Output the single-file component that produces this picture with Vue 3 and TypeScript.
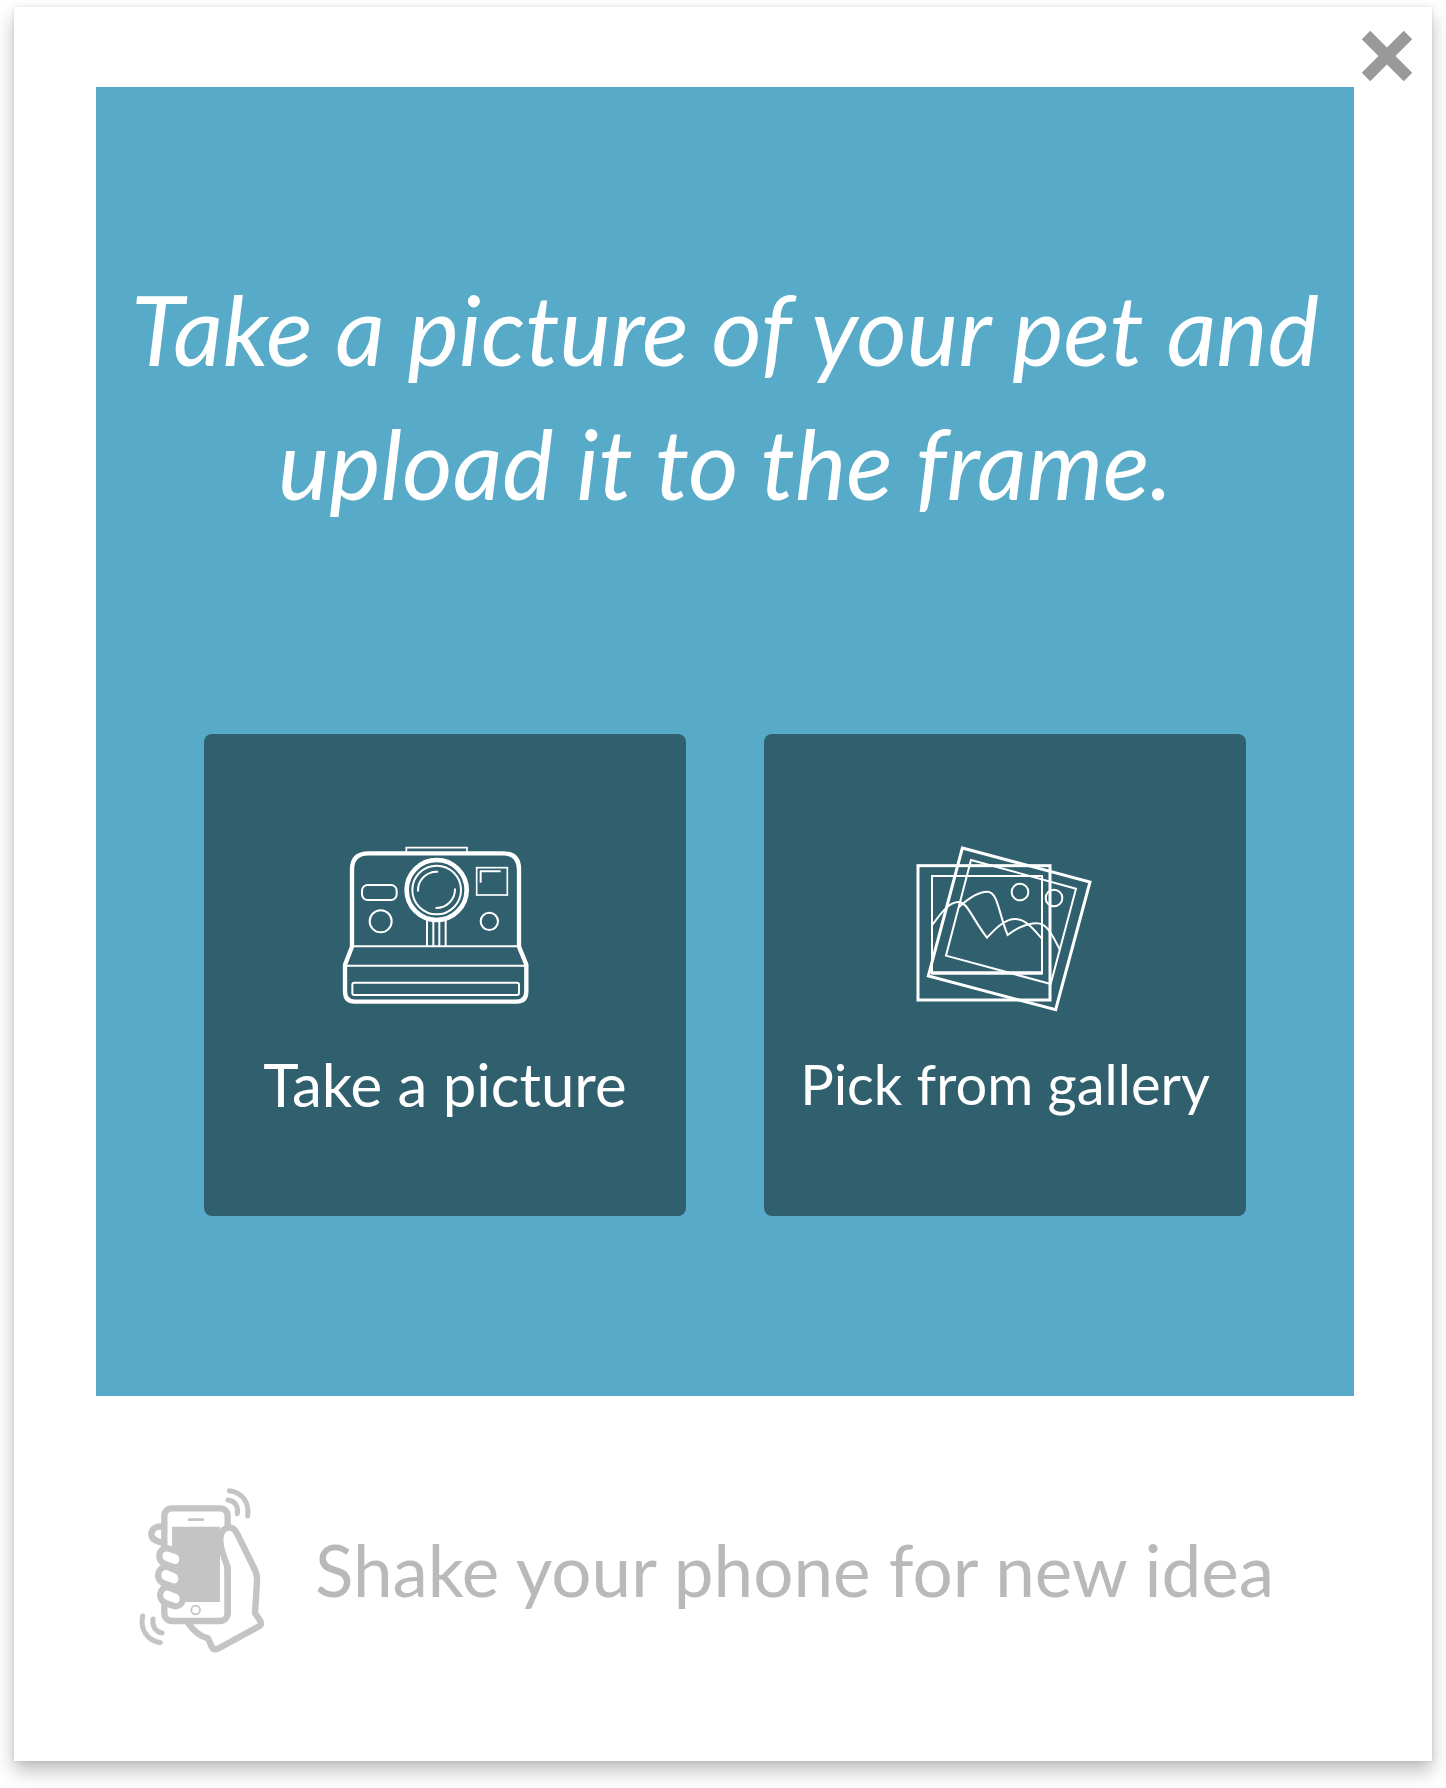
<script setup lang="ts">
interface Prompt {
  idea: string
  hint: string
}

const prompt: Prompt = {
  idea: 'Take a picture of your pet and upload it to the frame.',
  hint: 'Shake your phone for new idea',
}
</script>

<template>
  <main class="card">
    <header class="bar">
      <button class="close" type="button" aria-label="Close">
        <svg viewBox="0 0 50 50" aria-hidden="true">
          <path d="M4 4 46 46M46 4 4 46" fill="none" stroke="#999" stroke-width="12" />
        </svg>
      </button>
    </header>

    <section class="frame">
      <h1 class="idea">{{ prompt.idea }}</h1>
      <div class="actions">
        <button class="tile" type="button">
          <svg class="icon" viewBox="30 30 630 510" aria-hidden="true">
            <g fill="none" stroke="#fff" stroke-width="6">
              <path d="M229 66V53H411V66" stroke-width="5" />
              <path
                d="M66 350V118Q66 70 116 70H518Q567 70 567 118V350L589 404V484Q589 515 560 515H74Q45 515 45 484V404Z"
                stroke-width="13"
                stroke-linejoin="round"
              />
              <path d="M66 349H567M45 407H589" />
              <rect x="67" y="458" width="500" height="37" rx="6" />
              <rect x="96" y="165" width="104" height="45" rx="17" />
              <circle cx="152" cy="274" r="33" />
              <circle cx="478" cy="274" r="26" />
              <rect x="440" y="113" width="92" height="82" stroke-width="5" />
              <path d="M452 158V124H512" stroke-linejoin="round" />
              <path d="M291 270V348M310 270V348M328 270V348M347 270V348" />
              <circle cx="320" cy="180" r="90" stroke-width="14" fill="#30606e" />
              <circle cx="320" cy="180" r="73" />
              <path d="M264 182A56 56 0 0 1 322 125M375 178A56 56 0 0 1 319 234" stroke-linecap="round" />
            </g>
          </svg>
          <span class="label">Take a picture</span>
        </button>
        <button class="tile" type="button">
          <svg class="icon" viewBox="0 30 630 510" aria-hidden="true">
            <g fill="none" stroke="#fff" stroke-width="6">
              <rect x="54" y="107" width="396" height="403" stroke-width="9" />
              <rect x="96" y="138" width="330" height="291" />
              <path d="M94 429H428" stroke-width="11" />
              <path d="M187 54 570 156 467 539 85 438Z" stroke-width="9" />
              <path d="M213 90 528 176 452 462 138 377Z" />
              <circle cx="360" cy="186" r="25" />
              <circle cx="462" cy="204" r="25" />
              <path d="M97 285C125 246 147 218 173 216C202 213 215 264 261 323C286 297 313 267 346 267C378 267 402 300 426 326" />
              <path d="M176 232C205 205 239 185 262 185C294 185 296 252 323 315C345 297 382 279 411 280C445 280 461 326 480 359" />
            </g>
          </svg>
          <span class="label label-compact">Pick from gallery</span>
        </button>
      </div>
    </section>

    <footer class="hint">
      <svg class="shake" viewBox="0 0 480 600" aria-hidden="true">
        <g fill="none" stroke="#c4c4c4" stroke-linecap="round" stroke-linejoin="round">
          <path d="M190 460C207 484 224 499 249 505L260 530Q266 542 279 536L402 469Q411 464 406 453L390 429L396 334Q398 312 386 292L337 195" stroke-width="19" />
          <path d="M118 171C92 165 79 178 79 194C80 209 97 215 118 220" stroke-width="19" />
          <rect x="118" y="115" width="190" height="338" rx="23" stroke-width="19" fill="#fff" />
          <path d="M141 170H285V396H141Z" fill="#c4c4c4" stroke="none" />
          <path d="M192 149H233" stroke-width="8" />
          <circle cx="212" cy="420" r="13" stroke-width="5" />
          <path d="M286 205C288 179 302 172 315 173C329 174 335 187 345 209L380 292L330 300H308C301 262 284 240 286 205Z" fill="#fff" stroke="none" />
          <path d="M308 296C301 262 284 240 286 205C288 179 302 172 315 173C329 174 335 187 345 209L386 292" stroke-width="19" />
          <path d="M308 290V430" stroke-width="19" />
          <g fill="#fff" stroke-width="19">
            <path d="M128 235L156 244C181 254 176 294 147 292L118 281C93 270 101 232 128 235Z" />
            <path d="M125 290L153 301C178 313 173 350 146 350L116 340C89 330 97 290 125 290Z" />
            <path d="M130 352L158 363C182 374 177 410 149 409L121 399C95 387 104 348 130 352Z" />
          </g>
          <path d="M313 62C350 67 374 95 368 138M309 90C330 93 341 108 337 131" stroke-width="15" />
          <path d="M53 438C45 477 65 512 106 518M84 447C81 471 93 485 111 489" stroke-width="15" />
        </g>
      </svg>
      <p class="hint-text">{{ prompt.hint }}</p>
    </footer>
  </main>
</template>

<style>
body {
  background: #fff;
}
</style>

<style scoped>
.card {
  box-sizing: border-box;
  margin: 7px 14px 27px;
  padding: 0 78px 0 82px;
  background: #fff;
  box-shadow: 0 10px 18px rgba(0, 0, 0, 0.26), 0 0 4px rgba(0, 0, 0, 0.1);
  font-family: Lato, "Open Sans", sans-serif;
  display: flow-root;
}

button {
  padding: 0;
  border: 0;
  font: inherit;
  cursor: pointer;
}

.bar {
  display: flex;
  justify-content: flex-end;
  height: 80px;
  margin-right: -58px;
}

.close {
  width: 50px;
  height: 50px;
  margin-top: 24px;
  background: none;
}

.close svg {
  display: block;
  width: 100%;
}

.frame {
  display: flex;
  flex-direction: column;
  gap: 116px;
  padding: 175px 24px 180px;
  background: #57abc8;
  color: #fff;
}

.idea {
  margin: 0;
  padding-bottom: 88px;
  font-size: 97px;
  font-style: italic;
  font-weight: 400;
  line-height: 134px;
  text-align: center;
}

.actions {
  display: flex;
  justify-content: center;
  gap: 78px;
}

.tile {
  box-sizing: border-box;
  flex: 0 1 482px;
  aspect-ratio: 1;
  display: flex;
  flex-direction: column;
  align-items: center;
  gap: 38px;
  padding-top: 106px;
  border-radius: 8px;
  background: #30606e;
  color: #fff;
}

.icon {
  flex: none;
  width: 210px;
  height: 170px;
  overflow: visible;
}

.label {
  font-size: 60px;
  line-height: 72px;
  white-space: nowrap;
}

.label-compact {
  font-size: 56px;
}

.hint {
  display: flex;
  align-items: center;
  gap: 30px;
  padding: 74px 28px 91px 29px;
}

.shake {
  flex: none;
  width: 160px;
  height: 200px;
}

.hint-text {
  margin: 0;
  color: #b9b9b9;
  font-size: 71px;
  line-height: 80px;
}
</style>
